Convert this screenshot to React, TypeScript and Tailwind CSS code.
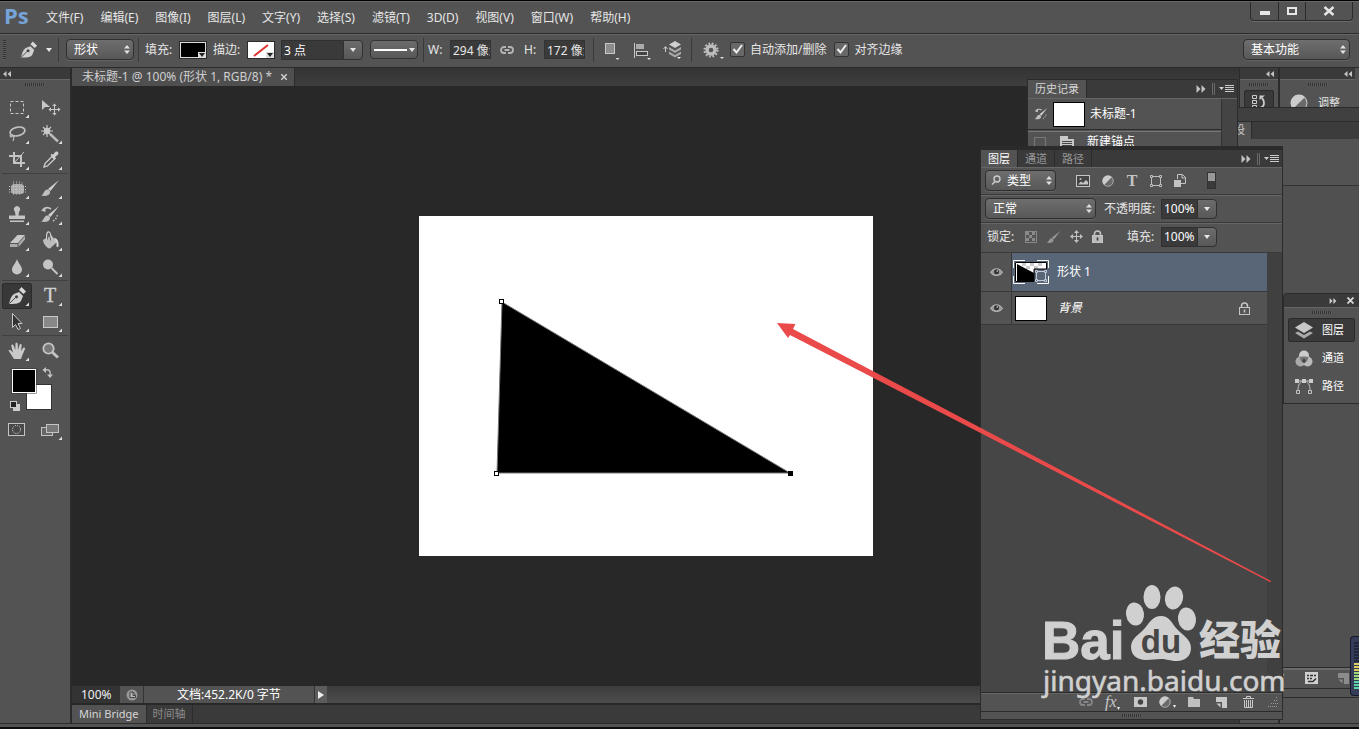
import type { ReactNode } from 'react';
import clsx from 'clsx';

const MENUS = [
  '文件(F)',
  '编辑(E)',
  '图像(I)',
  '图层(L)',
  '文字(Y)',
  '选择(S)',
  '滤镜(T)',
  '3D(D)',
  '视图(V)',
  '窗口(W)',
  '帮助(H)',
];

export default function App() {
  return (
    <div className="relative flex h-screen flex-col overflow-hidden border-t border-black bg-[#535353] font-['Noto_Sans','Noto_Sans_CJK_SC',sans-serif] text-xs leading-4 text-[#e6e6e6]">
      <MenuBar />
      <OptionsBar />
      <main className="flex min-h-0 flex-1 border-t border-[#2b2b2b]">
        <Toolbox />
        <DocumentArea />
        <Docks />
      </main>
      <div className="h-1 border-t border-[#2b2b2b] bg-[#535353]" />
      <div className="h-0.5 bg-[#0b0d10]" />

      <BrushPanel />
      <HistoryPanel />
      <LayersPanel />
      <CollapsedPanel />
      <PointerArrow />
      <Watermark />
      <div className="absolute top-[635px] right-0 flex h-[60px] w-[9px] flex-col justify-end gap-px rounded-l-sm border border-r-0 border-[#15182b] bg-[#353c58] pb-1.5 pl-[3px]">
        {Array.from({ length: 16 }, (_, i) => (
          <i
            key={i}
            className={clsx('h-0.5 w-full', i < 7 ? 'bg-[#22263a]' : i < 10 ? 'bg-[#d8cc62]' : i < 13 ? 'bg-[#9fd87a]' : 'bg-[#5fd3a8]')}
          />
        ))}
      </div>
    </div>
  );
}

/* ---------- top bars ---------- */

function MenuBar() {
  return (
    <header className="flex h-8 shrink-0 items-center border-t border-[#666] pl-1">
      <span className="mb-1.5 w-[42px] font-['Open_Sans',sans-serif] text-[22px] leading-6 font-bold text-[#76a3d8]">Ps</span>
      <nav className="flex gap-[17px]">
        {MENUS.map((m) => (
          <button key={m} className="whitespace-nowrap">
            {m}
          </button>
        ))}
      </nav>
      <div className="mr-1.5 ml-auto flex h-[19px] self-start rounded-b-sm border border-t-0 border-[#2b2b2b] shadow-[0_1px_0_#6a6a6a]">
        <button aria-label="最小化" className="flex w-7 items-center justify-center border-r border-[#2b2b2b]">
          <i className="mt-1 h-1 w-2.5 bg-[#e6e6e6]" />
        </button>
        <button aria-label="最大化" className="flex w-[27px] items-center justify-center border-r border-[#2b2b2b]">
          <i className="h-2 w-2.5 border-2 border-[#e6e6e6]" />
        </button>
        <button aria-label="关闭" className="flex w-[46px] items-center justify-center">
          <svg width="12" height="10" viewBox="0 0 12 10" stroke="#e6e6e6" strokeWidth="2.4">
            <path d="M1.5 1l9 8M10.5 1l-9 8" />
          </svg>
        </button>
      </div>
    </header>
  );
}

function OptionsBar() {
  return (
    <section className="flex h-[34px] shrink-0 items-center border-t border-[#2b2b2b] pb-0.5 whitespace-nowrap shadow-[inset_0_1px_0_#666]">
      <div className="ml-[3px] h-5 w-[3px] bg-[repeating-linear-gradient(#333_0_1px,#5c5c5c_1px_2px)]" />
      <svg className="ml-3.5" width="18" height="18" viewBox="3 1 19 18">
        <PenNib />
      </svg>
      <Caret className="ml-2" />
      <Divider className="ml-1.5" />
      <Picker label="工具模式" value="形状" className="ml-[7px] w-[68px]" />
      <Divider className="ml-1" />
      <span className="ml-1.5 w-[34px]">填充:</span>
      <button aria-label="填充颜色" className="relative h-[18px] w-7 border border-[#2b2b2b] bg-black outline-1 -outline-offset-2 outline-[#dcdcdc]">
        <span className="absolute right-0 bottom-0 flex h-1.5 w-2 items-center justify-center bg-[#ddd]">
          <Caret dark />
        </span>
      </button>
      <span className="ml-1.5 w-[34px]">描边:</span>
      <button aria-label="描边颜色" className="relative h-[18px] w-7 border border-[#2b2b2b] bg-white">
        <svg width="26" height="16" viewBox="0 0 26 16">
          <path d="M6 14L20 3" stroke="#e03030" strokeWidth="2" />
        </svg>
        <span className="absolute right-0 bottom-0 flex h-1.5 w-2 items-center justify-center bg-[#ddd]">
          <Caret dark />
        </span>
      </button>
      <Combo label="描边宽度" value="3 点" className="ml-1.5 w-[62px]" />
      <button
        aria-label="描边类型"
        className="ml-[7px] flex h-[19px] w-12 items-center justify-between rounded-sm border border-[#333] bg-linear-to-b from-[#6c6c6c] to-[#585858] pr-0.5 pl-[3px]"
      >
        <i className="h-0.5 w-[33px] bg-white" />
        <Caret />
      </button>
      <Divider className="ml-[5px]" />
      <label className="ml-1 flex items-center">
        <span className="w-[22px]">W:</span>
        <input defaultValue="294 像素" className="h-[19px] w-[41px] border border-[#333] bg-[#3a3a3a] pl-0.5" />
      </label>
      <button aria-label="链接宽高" className="ml-[9px]">
        <LinkIcon />
      </button>
      <label className="ml-2.5 flex items-center">
        <span className="w-5">H:</span>
        <input defaultValue="172 像素" className="h-[19px] w-[41px] border border-[#333] bg-[#3a3a3a] pl-0.5" />
      </label>
      <Divider className="ml-2" />
      <button aria-label="路径操作" className="ml-2.5">
        <svg width="16" height="20" viewBox="0 0 16 20">
          <rect x="1.5" y="3.5" width="9" height="10" fill="#8c8c8c" stroke="#c8c8c8" />
          <path d="M11.500 18h4l-2 2z" fill="#e0e0e0" />
        </svg>
      </button>
      <button aria-label="路径对齐" className="ml-3.5">
        <svg width="17" height="20" viewBox="0 0 17 20">
          <path d="M.5 3v15" stroke="#c8c8c8" />
          <rect x="2" y="4" width="8" height="5" fill="#aaa" />
          <rect x="2.500" y="11.500" width="11" height="4" fill="#444" stroke="#c8c8c8" />
          <path d="M13 18h4l-2 2z" fill="#e0e0e0" />
        </svg>
      </button>
      <button aria-label="路径排列" className="ml-3">
        <svg width="20" height="20" viewBox="0 0 20 20" fill="#a8a8a8">
          <path d="M2.500 7v5M.5 9l2-2.500L4.500 9" stroke="#c8c8c8" fill="none" />
          <path d="M12 1l6 3.500-6 3.500-6-3.500z" fill="#d0d0d0" />
          <path d="M6 7l6 3.500L18 7v2.500l-6 3.500-6-3.500zM6 11.500l6 3.500 6-3.500V14l-6 3.500L6 14z" />
          <path d="M14 17h4l-2 2z" fill="#eee" />
        </svg>
      </button>
      <Divider className="ml-2" />
      <button aria-label="设置" className="ml-[11px]">
        <svg width="21" height="20" viewBox="0 0 21 20">
          <g transform="translate(8 10)" fill="none" stroke="#bcbcbc">
            <circle r="4" strokeWidth="3.400" />
            <circle r="6.400" strokeWidth="2.400" strokeDasharray="1.700 1.651" />
          </g>
          <path d="M17 17h4l-2 2z" fill="#e0e0e0" />
        </svg>
      </button>
      <Tick label="自动添加/删除" className="ml-1.5" />
      <Tick label="对齐边缘" className="ml-2" />
      <Picker label="工作区" value="基本功能" className="mr-[9px] ml-auto w-[107px]" />
    </section>
  );
}

/* ---------- shared controls ---------- */

function Divider({ className }: { className?: string }) {
  return <i className={clsx('h-6 w-px shrink-0 bg-[#3a3a3a]', className)} />;
}

function Caret({ className, dark }: { className?: string; dark?: boolean }) {
  return (
    <svg className={className} width="6" height="4" viewBox="0 0 6 4">
      <path d="M0 0h6L3 4z" fill={dark ? '#222' : '#e6e6e6'} />
    </svg>
  );
}

function Picker({ label, value, className, icon }: { label: string; value: string; className?: string; icon?: ReactNode }) {
  return (
    <span className={clsx('relative inline-flex h-[21px] shrink-0', className)}>
      <select
        aria-label={label}
        className={clsx(
          'w-full appearance-none rounded-sm border border-[#2f2f2f] bg-linear-to-b from-[#6e6e6e] to-[#585858] text-xs leading-4 text-white shadow-[0_1px_0_#636363]',
          icon ? 'pl-[21px]' : 'pl-[7px]',
        )}
      >
        <option>{value}</option>
      </select>
      {icon && <span className="pointer-events-none absolute top-[5px] left-1.5">{icon}</span>}
      <svg className="pointer-events-none absolute top-1.5 right-1" width="6" height="9" viewBox="0 0 6 9" fill="#e0e0e0">
        <path d="M0 3.500h6L3 0zM0 5.500h6L3 9z" />
      </svg>
    </span>
  );
}

function Combo({ label, value, className }: { label: string; value: string; className?: string }) {
  return (
    <span className="flex">
      <input
        aria-label={label}
        defaultValue={value}
        className={clsx('h-5 border border-r-0 border-[#303030] bg-[#3a3a3a] pl-0.5 text-white', className)}
      />
      <button
        aria-label={`${label}选项`}
        className="flex h-5 w-5 items-center justify-center rounded-r-sm border border-[#303030] bg-linear-to-b from-[#6c6c6c] to-[#585858]"
      >
        <Caret />
      </button>
    </span>
  );
}

function Tick({ label, className }: { label: string; className?: string }) {
  return (
    <label className={clsx('flex items-center gap-[5px]', className)}>
      <span className="relative flex">
        <input type="checkbox" defaultChecked className="h-[15px] w-[15px] appearance-none rounded-xs border border-[#333] bg-[#686868]" />
        <svg className="pointer-events-none absolute top-0 left-0" width="15" height="15" viewBox="0 0 15 15">
          <path d="M3.500 7l3 3.500L12 3" fill="none" stroke="#eee" strokeWidth="2" />
        </svg>
      </span>
      {label}
    </label>
  );
}

function Grip() {
  return <div className="mx-auto h-[3px] w-5 bg-[repeating-linear-gradient(90deg,#333_0_1px,#5c5c5c_1px_2px)]" />;
}

function Chevrons({ left }: { left?: boolean }) {
  return (
    <svg width="10" height="8" viewBox="0 0 10 8" fill="#c4c4c4">
      <path d={left ? 'M4.500 1v6L1 4zM9 1v6L5.500 4z' : 'M.5 0v8l4-4zM5.500 0v8l4-4z'} />
    </svg>
  );
}

function PanelTools() {
  return (
    <div className="mr-[3px] ml-auto flex items-center">
      <button aria-label="折叠面板">
        <Chevrons />
      </button>
      <i className="ml-1.5 h-3 w-[3px] border-x border-[#6a6a6a]" />
      <button aria-label="面板菜单" className="ml-1">
        <svg width="15" height="10" viewBox="0 0 15 10">
          <path d="M0 3h5L2.500 6z" fill="#ccc" />
          <path d="M6 1.500h9M6 3.500h9M6 5.500h9M6 7.500h9" stroke="#ccc" strokeWidth="1" />
        </svg>
      </button>
    </div>
  );
}

function LinkIcon({ dim }: { dim?: boolean }) {
  return (
    <svg width="14" height="10" viewBox="0 0 14 10" fill="none" stroke={dim ? '#858585' : '#b4b4b4'} strokeWidth="1.800">
      <path d="M6 2H4a3 3 0 000 6h2M8 2h2a3 3 0 010 6H8M4.500 5h5" />
    </svg>
  );
}

/* ---------- toolbox ---------- */

function PenNib() {
  return (
    <g>
      <path d="M4 18c1-4 2-8 5-10l5-2 4 4-2 5c-2 3-7 3-12 3z" fill="#cfcfcf" />
      <path d="M14 4l2.500-3L21 5.500 18.500 8z" fill="#d8d8d8" />
      <path d="M4.500 17.500l6-6" stroke="#444" />
      <circle cx="11.500" cy="10.800" r="1.600" fill="#444" />
    </g>
  );
}

function BrushShape() {
  return (
    <g>
      <path d="M21 1l-8.500 11-2.500-2z" fill="#d0d0d0" />
      <path d="M9 10.500c2 0 3.500 1.500 3 3.500-1 3-5 3.500-9 2.500 3-1 3-5.500 6-6z" fill="#c0c0c0" />
    </g>
  );
}

function HistoryBrushShape() {
  return (
    <g>
      <BrushShape />
      <path d="M5 4.500c3-2.500 6-2 8-.5" fill="none" stroke="#c4c4c4" strokeWidth="1.600" />
      <path d="M3 5.500L7.500 2v5z" fill="#c4c4c4" />
      <path d="M15 16c3-1.500 4-4 4.500-7" fill="none" stroke="#c4c4c4" strokeWidth="1.400" strokeDasharray="1.500 1.500" />
    </g>
  );
}

const TOOL_GROUPS: { name: string; art: ReactNode; active?: boolean; single?: boolean }[][] = [
  [
    { name: '矩形选框工具', art: <rect x="5.500" y="3.500" width="13" height="12" fill="none" stroke="#c8c8c8" strokeDasharray="3 2" /> },
    {
      name: '移动工具',
      single: true,
      art: (
        <g>
          <path d="M4 2v10l3-3h5z" fill="#c8c8c8" />
          <path d="M12.500 11.500h8M16.500 7.500v8" stroke="#c8c8c8" />
          <path d="M16.500 5.500l2.200 2.500h-4.400zM16.500 17.500l2.200-2.500h-4.400zM10.500 11.500l2.500-2.200v4.400zM22.500 11.500l-2.500-2.200v4.400z" fill="#c8c8c8" />
        </g>
      ),
    },
    {
      name: '套索工具',
      art: (
        <g fill="none" stroke="#c0c0c0" strokeWidth="1.700">
          <ellipse cx="12.500" cy="7.500" rx="7.500" ry="4.300" transform="rotate(-12 12.500 7.500)" />
          <path d="M6 10c-2 2 0 4 1 2.500s3 0 1 4.500" strokeWidth="1.200" />
        </g>
      ),
    },
    {
      name: '魔棒工具',
      art: (
        <g>
          <path d="M12 10l8 7.500" stroke="#bbb" strokeWidth="2.400" />
          <path d="M9 1v12M3 7h12M5 3l8 8M13 3l-8 8" stroke="#c8c8c8" strokeWidth="1.200" />
          <circle cx="9" cy="7" r="3.200" fill="#c8c8c8" />
        </g>
      ),
    },
    {
      name: '裁剪工具',
      art: (
        <g fill="none" stroke="#c4c4c4" strokeWidth="2">
          <path d="M4 6h12v11M9 2v11h11" />
          <path d="M9 13L19 2" strokeWidth="1" />
        </g>
      ),
    },
    {
      name: '吸管工具',
      art: (
        <g>
          <path d="M6 17l1-3.500 7-7L16.500 9l-7 7z" fill="none" stroke="#c8c8c8" strokeWidth="1.400" />
          <path d="M12.500 5l1.200-1.200 1.200 1 2.600-3c1.500-1.300 4 .8 2.500 2.600l-3 2.700 1 1.300-1.300 1.300z" fill="#cfcfcf" />
        </g>
      ),
    },
  ],
  [
    {
      name: '修补工具',
      art: (
        <g>
          <rect x="6" y="5" width="13" height="10" rx="3.500" fill="#a8a8a8" />
          <path d="M4 7.500h17M4 10.500h17M4 13h17M8.500 2.500v14M11.500 2.500v14M14.500 2.500v14M17 3.500v12" stroke="#c4c4c4" strokeDasharray="1 1" />
        </g>
      ),
    },
    { name: '画笔工具', art: <BrushShape /> },
    {
      name: '仿制图章工具',
      art: (
        <g fill="#c4c4c4">
          <path d="M12 1a3.400 3.400 0 012 6l-.5 3.500H20V14H4v-3.500h6.500L10 7a3.400 3.400 0 012-6z" />
          <path d="M5 15.500h14V17H5z" />
        </g>
      ),
    },
    { name: '历史记录画笔工具', art: <HistoryBrushShape /> },
    {
      name: '橡皮擦工具',
      art: (
        <g>
          <path d="M5 12l7.500-8H20l-7 8z" fill="#c8c8c8" />
          <path d="M5 13h7.500v3H5zM13.500 12.500L20 5v3.500L13.500 16z" fill="#aaa" />
        </g>
      ),
    },
    {
      name: '油漆桶工具',
      art: (
        <g>
          <path d="M5 9l8-5 6 7-7 6.500c-2 1-7-5-7-8.500z" fill="#bdbdbd" />
          <path d="M9 9c-1-6 0-8.500 2-8S13 6 13 9" fill="none" stroke="#d8d8d8" strokeWidth="1.200" />
          <path d="M9.500 8.500c0-2 .5-4 1.500-4s1.500 3 1.500 5" fill="none" stroke="#555" />
          <path d="M16 7c3 0 5 3 4.500 8-.2 1.500-2 1.500-2 0 0-2 .5-4-1-5z" fill="#dadada" />
        </g>
      ),
    },
    { name: '模糊工具', art: <path d="M12 2c1 4 5 7 5 10.500a5 5 0 01-10 0C7 9 11 6 12 2z" fill="#c6c6c6" /> },
    {
      name: '减淡工具',
      art: (
        <g>
          <circle cx="10" cy="7.500" r="5" fill="#c4c4c4" />
          <path d="M13.500 11l6 6" stroke="#c4c4c4" strokeWidth="2" />
        </g>
      ),
    },
  ],
  [
    { name: '钢笔工具', active: true, art: <PenNib /> },
    {
      name: '文字工具',
      art: (
        <text x="12" y="16" textAnchor="middle" fontSize="20" fontFamily="Liberation Serif, serif" fill="#d0d0d0" stroke="#d0d0d0" strokeWidth=".4">
          T
        </text>
      ),
    },
    { name: '路径选择工具', art: <path d="M7.500 1.500v14l3-3 2.500 5 2.500-1-2.500-5h4z" fill="#333" stroke="#c8c8c8" /> },
    { name: '矩形工具', art: <rect x="5.500" y="4.500" width="14" height="11" fill="#888" stroke="#c8c8c8" /> },
  ],
  [
    {
      name: '抓手工具',
      art: (
        <path
          d="M3.500 9.500c1-1 2.200-.4 3 .6L8 11.500 6.300 5c-.3-1.600 1.600-2.200 2.200-.7L10.400 9V2.800c0-1.500 2.200-1.500 2.300 0L13 9l1.500-5c.5-1.500 2.400-1 2.200.6L16 10l2.300-3.200c1-1 2.300 0 1.700 1.200L17 15l-1 3H9z"
          fill="#c9c9c9"
        />
      ),
    },
    {
      name: '缩放工具',
      single: true,
      art: (
        <g>
          <path d="M14.500 11.500l5.500 5" stroke="#c4c4c4" strokeWidth="3" />
          <circle cx="10.500" cy="7.500" r="5.200" fill="#777" stroke="#c4c4c4" strokeWidth="1.800" />
        </g>
      ),
    },
  ],
];

function Toolbox() {
  return (
    <aside className="flex w-[72px] shrink-0 flex-col border-r-2 border-[#2b2b2b]">
      <div className="flex h-[11px] items-center bg-[#3a3a3a] pl-0.5">
        <Chevrons left />
      </div>
      <div className="border-t border-[#666] pt-[3px] pb-[9px]">
        <Grip />
      </div>
      {TOOL_GROUPS.map((group, g) => (
        <div key={g} className={clsx('mx-0.5 grid grid-cols-[30px_30px] gap-x-[3px]', g > 0 && 'border-t border-[#404040] pt-0.5')}>
          {group.map((tool) => (
            <button
              key={tool.name}
              aria-label={tool.name}
              className={clsx('flex h-[26px] items-center justify-center rounded-xs border', tool.active ? 'border-[#2b2b2b] bg-[#383838]' : 'border-transparent')}
            >
              <svg width="24" height="20" viewBox="0 0 24 20">
                {tool.art}
                {!tool.single && <path d="M24 16.500V20h-3.500z" fill="#e0e0e0" />}
              </svg>
            </button>
          ))}
        </div>
      ))}
      <div className="flex flex-col gap-px pt-px pl-2">
        <svg width="48" height="56" viewBox="8 364 48 56">
          <rect x="26.500" y="383.500" width="25" height="25" fill="#fff" stroke="#333" />
          <rect x="11.500" y="367.500" width="25" height="25" fill="#333" />
          <rect x="12.500" y="368.500" width="23" height="23" fill="#000" stroke="#fff" />
          <path d="M45 369c4-1 6 1 5 5" fill="none" stroke="#bbb" strokeWidth="1.500" />
          <path d="M46 366v6l-3.500-3zM47 373.500h6l-3 3.500z" fill="#c4c4c4" />
          <rect x="13" y="403" width="7" height="7" fill="#ccc" />
          <rect x="10.500" y="400.500" width="6" height="6" fill="#222" stroke="#ccc" />
        </svg>
        <div className="flex gap-4">
          <button aria-label="快速蒙版">
            <svg width="17" height="18" viewBox="0 0 17 18">
              <rect x=".5" y="1.500" width="16" height="12" fill="#484848" stroke="#c4c4c4" />
              <circle cx="8.500" cy="7.500" r="4" fill="none" stroke="#e0e0e0" strokeDasharray="1 1.100" />
            </svg>
          </button>
          <button aria-label="屏幕模式">
            <svg width="22" height="18" viewBox="0 0 22 18">
              <rect x=".5" y="5.500" width="11" height="8" fill="#666" stroke="#c4c4c4" />
              <rect x="5.500" y="2.500" width="12" height="8" fill="#777" stroke="#c4c4c4" />
              <path d="M21 14.500V18h-3.500z" fill="#e0e0e0" />
            </svg>
          </button>
        </div>
      </div>
    </aside>
  );
}

/* ---------- document ---------- */

function DocumentArea() {
  return (
    <section className="flex min-w-0 flex-1 flex-col bg-[#282828]">
      <div className="flex h-[18px] shrink-0 bg-linear-to-b from-[#343434] to-[#3e3e3e]">
        <div className="flex items-center border-r border-[#2b2b2b] bg-[#4f4f4f] pr-[7px] pl-2.5 text-[#d0d0d0]">
          <span className="whitespace-nowrap">未标题-1 @ 100% (形状 1, RGB/8) *</span>
          <button aria-label="关闭文档" className="ml-[9px]">
            <svg width="6" height="6" viewBox="0 0 6 6" stroke="#ccc" strokeWidth="1.500">
              <path d="M0 0l6 6M6 0L0 6" />
            </svg>
          </button>
        </div>
      </div>
      <div className="flex min-h-0 flex-1">
        <div className="flex flex-1 items-center justify-center">
          <svg className="bg-white" width="454" height="340" viewBox="0 0 454 340">
            <path d="M83 86l-5 171h293z" stroke="#777" />
            <g fill="#fff" stroke="#000">
              <rect x="80.500" y="83.500" width="4" height="4" />
              <rect x="75.500" y="255.500" width="4" height="4" />
              <rect x="369.500" y="255.500" width="4" height="4" fill="#000" />
            </g>
          </svg>
        </div>
        <div className="w-[19px] bg-[#3f3f3f]" />
      </div>
      <div className="flex h-[17px] shrink-0 items-stretch bg-linear-to-b from-[#3c3c3c] to-[#4c4c4c] leading-[17px]">
        <span className="w-12 bg-[#333] pl-[9px] text-[#f0f0f0]">100%</span>
        <button aria-label="状态" className="flex w-6 items-center justify-center border-r border-[#333] bg-[#535353]">
          <svg width="12" height="12" viewBox="0 0 12 12">
            <circle cx="6" cy="6" r="5.500" fill="#999" />
            <path d="M4 3v5.500h5.500V6.500L7 3z" fill="#bbb" stroke="#444" />
            <path d="M7 3v3.500h2.500" fill="none" stroke="#444" />
          </svg>
        </button>
        <span className="w-[171px] border-r border-[#333] bg-[#535353] text-center text-white">文档:452.2K/0 字节</span>
        <button aria-label="显示状态菜单" className="flex w-3 items-center justify-center bg-[#5c5c5c]">
          <svg width="6" height="8" viewBox="0 0 6 8">
            <path d="M0 0v8l6-4z" fill="#eee" />
          </svg>
        </button>
      </div>
      <div className="mt-0.5 flex h-[18px] shrink-0 bg-[#3a3a3a] text-[11px]">
        <button className="bg-[#535353] px-[7px] text-[#d6d6d6]">Mini Bridge</button>
        <button className="border-x border-[#2b2b2b] px-1.5 text-[#8c8c8c]">时间轴</button>
      </div>
    </section>
  );
}

function Docks() {
  return (
    <aside className="flex w-[120px] shrink-0 border-l border-[#2b2b2b] text-[11px]">
      <div className="flex w-10 flex-col border-r-2 border-[#2b2b2b]">
        <div className="flex h-[11px] items-center justify-end bg-[#3a3a3a] pr-[3px]">
          <Chevrons left />
        </div>
        <div className="border-t border-[#666] pt-[3px] pb-1">
          <Grip />
        </div>
        <button aria-label="历史记录" className="mx-1 flex h-6 justify-center rounded-xs border border-[#2b2b2b] bg-[#3a3a3a] pt-0.5">
          <svg width="18" height="18" viewBox="0 0 18 18" fill="none" stroke="#ccc">
            <path d="M2.500 2.500h4v3h-4zM2.500 7.500h4v3h-4zM2.500 12.500h4v3h-4z" />
            <path d="M10 15c5-1 5-7 2-10" strokeWidth="1.800" />
            <path d="M9.500 7V2.500H15z" fill="#ccc" stroke="none" />
          </svg>
        </button>
      </div>
      <div className="flex flex-1 flex-col border-r-4 border-[#535353]">
        <div className="flex h-[11px] items-center justify-end bg-[#3a3a3a] pr-0.5">
          <Chevrons left />
        </div>
        <div className="border-t border-[#666] pt-[3px] pb-1">
          <Grip />
        </div>
        <button className="flex items-center gap-2.5 pt-1 pl-2.5">
          <HalfCircle size={18} />
          调整
        </button>
      </div>
    </aside>
  );
}

function HalfCircle({ size }: { size: number }) {
  return (
    <svg width={size} height={size} viewBox="0 0 17 17">
      <circle cx="8.500" cy="8.500" r="7.500" fill="#6a6a6a" stroke="#c4c4c4" />
      <path d="M3 14A7.700 7.700 0 0114 3z" fill="#ccc" />
    </svg>
  );
}

/* ---------- floating panels ---------- */

function BrushPanel() {
  return (
    <section className="absolute top-[106px] right-0 flex h-[591px] w-[180px] flex-col border-y border-[#2b2b2b] bg-[#535353]">
      <div className="h-[13px] bg-[#404040]" />
      <div className="flex h-[18px] border-t border-[#2b2b2b] bg-[#3c3c3c] text-[11px]">
        <span className="border-r border-[#2b2b2b] bg-[#535353] pr-1.5 pl-[22px] text-[#ccc]">画笔预设</span>
      </div>
      <div className="h-[47px] border-b border-[#333]" />
      <div className="flex-1 bg-[#505050]" />
      <div className="flex h-[22px] items-center justify-end gap-5 border-y border-[#2b2b2b] pr-2.5 shadow-[inset_0_2px_0_#6a6a6a]">
        <svg width="10" height="10" viewBox="0 0 10 10">
          <path d="M1 6l2 3 6-8" fill="none" stroke="#888" strokeWidth="1.500" />
        </svg>
        <svg width="13" height="12" viewBox="0 0 13 12">
          <path d="M0 0h13v12H0z" fill="#d0d0d0" />
          <path d="M2 3.500h2M5 3.500h3M9 3.500h2M2 6.500h2M5 6.500h2M3 9.500h5l3-3" stroke="#333" strokeWidth="1.500" fill="none" />
        </svg>
        <NewPage dim />
      </div>
      <div className="h-2" />
    </section>
  );
}

function HistoryPanel() {
  return (
    <section className="absolute top-[78px] right-[121px] flex w-[211px] flex-col border border-[#2b2b2b] bg-[#535353]">
      <div className="flex h-[18px] shrink-0 bg-[#3a3a3a] text-[11px]">
        <span className="border-r border-[#2b2b2b] bg-[#535353] px-[7px] leading-[18px] text-[#d6d6d6]">历史记录</span>
        <PanelTools />
      </div>
      <div className="flex flex-1 border-t border-[#666]">
        <div className="flex-1">
          <div className="flex h-[31px] items-center border-b border-[#2b2b2b] pl-1.5">
            <svg width="14" height="14" viewBox="2 1 20 17">
              <HistoryBrushShape />
            </svg>
            <i className="ml-[5px] h-[25px] w-8 border border-black bg-white" />
            <span className="ml-[5px] text-white">未标题-1</span>
          </div>
          <div className="mt-px flex border-t border-[#777] pt-0.5 pl-1.5">
            <i className="mt-[3px] h-3 w-3 border border-[#777]" />
            <svg className="mt-0.5 ml-3.5" width="14" height="14" viewBox="0 0 14 14">
              <path d="M0 0h8v3h6v11H0z" fill="#c8c8c8" />
              <path d="M2 5.500h10M2 7.500h10M2 9.500h10" stroke="#444" />
            </svg>
            <span className="ml-[13px] text-white">新建锚点</span>
          </div>
        </div>
        <div className="w-4 border-l border-[#333] bg-[#444]" />
      </div>
    </section>
  );
}

function Shape({ bright }: { bright?: boolean }) {
  return (
    <svg width="12" height="12" viewBox="0 0 12 12" fill="none" stroke={bright ? '#c3cad6' : '#bdbdbd'}>
      <path d="M3 1.500h6M3 10.500h6M1.500 3v6M10.500 3v6" />
      <path d="M.5.5h2v2h-2zM9.500.5h2v2h-2zM.5 9.500h2v2h-2zM9.500 9.500h2v2h-2z" />
    </svg>
  );
}

function Padlock({ hollow }: { hollow?: boolean }) {
  return (
    <svg width="11" height="13" viewBox="0 0 11 13">
      <path d="M2.500 6V4a3 3 0 016 0v2" fill="none" stroke="#c4c4c4" strokeWidth="1.500" />
      <rect x=".5" y="5.500" width="10" height="7" fill={hollow ? '#555' : '#bbb'} stroke="#c4c4c4" />
      <path d="M5.500 7.500v3" stroke={hollow ? '#c4c4c4' : '#333'} strokeWidth="1.500" />
    </svg>
  );
}

function NewPage({ dim }: { dim?: boolean }) {
  return (
    <svg width="11" height="11" viewBox="0 0 11 11" fill={dim ? '#8c8c8c' : '#c8c8c8'}>
      <path d="M0 0h11v11H6V5H0z" />
      <path d="M.5 6.500h4v4z" />
    </svg>
  );
}

function Eye() {
  return (
    <svg width="13" height="10" viewBox="0 0 13 10">
      <path d="M.5 5.500c2.500-5 9.500-5 12 0-2.500 4-9.500 4-12 0z" fill="#999" stroke="#bbb" />
      <circle cx="6.500" cy="4.800" r="2.500" fill="#333" />
      <circle cx="7.300" cy="4" r=".8" fill="#ddd" />
    </svg>
  );
}

function LayersPanel() {
  return (
    <section className="absolute top-[145px] right-[76px] bottom-[9px] flex w-[303px] flex-col border border-t-4 border-[#2b2b2b] bg-[#535353] whitespace-nowrap">
      <div className="flex h-[17px] shrink-0 bg-[#3a3a3a] text-[11px] leading-[17px]">
        <button className="bg-[#535353] px-[7px] text-white">图层</button>
        <button className="border-x border-[#2b2b2b] px-[7px] text-[#999]">通道</button>
        <button className="border-r border-[#2b2b2b] px-[7px] text-[#999]">路径</button>
        <PanelTools />
      </div>

      <div className="flex h-7 shrink-0 items-center border-b border-[#3a3a3a] pl-1 shadow-[inset_0_1px_0_#666]">
        <Picker
          label="滤镜类型"
          value="类型"
          className="w-[71px]"
          icon={
            <svg width="10" height="10" viewBox="0 0 10 10" fill="none" stroke="#ccc" strokeWidth="1.400">
              <circle cx="6" cy="4" r="3" />
              <path d="M4 6.500L1 9.500" />
            </svg>
          }
        />
        <div className="ml-5 flex items-center gap-3">
          <button aria-label="像素图层">
            <svg width="14" height="12" viewBox="0 0 14 12">
              <rect x=".5" y=".5" width="13" height="11" fill="#444" stroke="#c4c4c4" />
              <path d="M2 9.500l3-3 2 1.500 3-3 2 2v2.500z" fill="#c4c4c4" />
              <circle cx="4.500" cy="4" r="1" fill="#c4c4c4" />
            </svg>
          </button>
          <button aria-label="调整图层">
            <HalfCircle size={12} />
          </button>
          <button aria-label="文字图层" className="w-3 font-['Liberation_Serif',serif] text-base leading-4 font-bold text-[#c4c4c4]">
            T
          </button>
          <button aria-label="形状图层">
            <Shape />
          </button>
          <button aria-label="智能对象">
            <svg width="12" height="13" viewBox="0 0 12 13">
              <path d="M3.500 5V.5h5L11.500 3.500v6H7" fill="none" stroke="#c4c4c4" />
              <path d="M8 .5v3.500h3.500" fill="none" stroke="#c4c4c4" />
              <rect y="6" width="7" height="7" fill="#c4c4c4" />
            </svg>
          </button>
        </div>
        <button aria-label="滤镜开关" className="ml-[21px] h-[17px] w-[9px] border border-[#333] bg-[#3a3a3a]">
          <i className="block h-2 bg-[#999]" />
          <i className="block h-[7px]" />
        </button>
      </div>

      <div className="flex h-7 shrink-0 items-center border-b border-[#3a3a3a] pl-1 shadow-[inset_0_1px_0_#666]">
        <Picker label="混合模式" value="正常" className="w-[111px]" />
        <span className="ml-2 w-[57px]">不透明度:</span>
        <Combo label="不透明度" value="100%" className="w-[36px]" />
      </div>

      <div className="flex h-[30px] shrink-0 items-center border-b border-[#3a3a3a] pb-0.5 pl-1.5 shadow-[inset_0_1px_0_#666]">
        <span className="w-[38px]">锁定:</span>
        <div className="flex items-center gap-[9px]">
          <button aria-label="锁定透明像素">
            <svg width="12" height="12" viewBox="0 0 12 12" fill="#777" stroke="#888">
              <rect x=".5" y=".5" width="11" height="11" fill="#555" />
              <path d="M1 1h3v3H1zM7 1h3v3H7zM4 4h3v3H4zM1 7h3v3H1zM7 7h3v3H7z" stroke="none" fill="#8a8a8a" />
            </svg>
          </button>
          <button aria-label="锁定图像像素" className="opacity-60">
            <svg width="15" height="14" viewBox="2 0 20 18">
              <BrushShape />
            </svg>
          </button>
          <button aria-label="锁定位置">
            <svg width="13" height="13" viewBox="0 0 13 13" fill="#c0c0c0" stroke="#c0c0c0">
              <path d="M6.500 2v9M2 6.500h9" />
              <path d="M6.500 0L9 3H4zM6.500 13L9 10H4zM0 6.500L3 4v5zM13 6.500L10 4v5z" stroke="none" />
            </svg>
          </button>
          <button aria-label="锁定全部">
            <Padlock />
          </button>
        </div>
        <span className="ml-6 w-[34px]">填充:</span>
        <Combo label="填充" value="100%" className="w-[36px]" />
      </div>

      <div className="flex min-h-0 flex-1">
        <ul className="flex-1 bg-[#464646]">
          <li className="flex h-[39px] items-center border-b border-[#383838] bg-[#596678]">
            <button aria-label="隐藏形状 1" className="flex h-full w-[31px] items-center justify-center border-r border-[#383838] bg-[#535353]">
              <Eye />
            </button>
            <span className="relative ml-px">
              <svg className="block" width="36" height="24" viewBox="0 0 36 24">
                <path d="M2 2h32v20H2z" fill="#fff" />
                <path d="M9 2h4v4H9zM17 2h4v4h-4zM25 2h4v4h-4zM13 6h4v3h-4zM21 6h4v3h-4z" fill="#ccc" />
                <path d="M4 4l17 9v8H4z" fill="#000" />
                <path d="M21 9h15v15H21z" fill="#596678" />
                <path d="M21 21.500H2.500v-19h31V9H21z" fill="none" stroke="#000" />
                <path d="M.5 8V.5H12M24 .5h11.500V8M.5 16v7.500H12M24 23.500h11.500V16" fill="none" stroke="#fff" />
              </svg>
              <span className="absolute top-2.5 left-[22px]">
                <Shape bright />
              </span>
            </span>
            <span className="ml-2 text-white">形状 1</span>
          </li>
          <li className="flex h-[33px] items-center border-b border-[#383838] bg-[#535353]">
            <button aria-label="隐藏背景" className="flex h-full w-[31px] items-center justify-center border-r border-[#383838]">
              <Eye />
            </button>
            <i className="ml-[3px] h-[25px] w-8 border border-black bg-white" />
            <span className="ml-[11px] text-white italic">背景</span>
            <span className="mr-[17px] ml-auto">
              <Padlock hollow />
            </span>
          </li>
        </ul>
        <div className="w-[15px] bg-[#404040]" />
      </div>

      <div className="flex h-5 shrink-0 items-center justify-end gap-3 border-y border-[#2b2b2b] pr-0.5 shadow-[inset_0_1px_0_#666]">
        <button aria-label="链接图层">
          <LinkIcon dim />
        </button>
        <button aria-label="图层样式" className="flex w-[17px] items-end font-['Liberation_Serif',serif] text-base leading-4 text-[#c8c8c8] italic">
          fx
          <svg width="3" height="3" viewBox="0 0 3 3">
            <path d="M0 0h3L1.500 3z" fill="#eee" />
          </svg>
        </button>
        <button aria-label="图层蒙版">
          <svg width="13" height="10" viewBox="0 0 13 10">
            <path d="M0 0h13v10H0z" fill="#c8c8c8" />
            <circle cx="6.500" cy="5" r="2.700" fill="#444" />
          </svg>
        </button>
        <button aria-label="新建调整图层" className="flex items-end gap-0.5">
          <HalfCircle size={12} />
          <svg width="3" height="3" viewBox="0 0 3 3">
            <path d="M0 0h3L1.500 3z" fill="#eee" />
          </svg>
        </button>
        <button aria-label="新建组">
          <svg width="12" height="10" viewBox="0 0 12 10">
            <path d="M0 0h5l1 2h6v8H0z" fill="#c0c0c0" />
          </svg>
        </button>
        <button aria-label="新建图层" className="ml-1">
          <NewPage />
        </button>
        <button aria-label="删除图层" className="ml-1">
          <svg width="11" height="12" viewBox="0 0 11 12" fill="none" stroke="#c8c8c8">
            <path d="M0 2.500h11M3.500 2V.5h4V2M1.500 4v7.500h8V4M3.500 4v7M5.500 4v7M7.500 4v7" />
          </svg>
        </button>
        <svg width="14" height="12" viewBox="0 0 14 12" stroke="#999" strokeDasharray="1 1">
          <path d="M2 10.500h10M5 7.500h7M8 4.500h4M10 1.500h2" />
        </svg>
      </div>
      <div className="flex h-[7px] shrink-0 items-center">
        <Grip />
      </div>
    </section>
  );
}

function CollapsedPanel() {
  return (
    <section className="absolute top-[292px] right-0 flex w-[76px] flex-col rounded-tl-sm border border-r-0 border-[#2b2b2b] bg-[#535353] pb-[5px]">
      <div className="flex h-[13px] items-center justify-end gap-2.5 bg-[#3a3a3a] pr-[5px]">
        <svg width="8" height="6" viewBox="0 0 10 8" fill="#ccc">
          <path d="M.5 0v8l4-4zM5.500 0v8l4-4z" />
        </svg>
        <button aria-label="关闭面板">
          <svg width="7" height="7" viewBox="0 0 7 7" stroke="#d8d8d8" strokeWidth="1.800">
            <path d="M.5.5l6 6M6.500.5l-6 6" />
          </svg>
        </button>
      </div>
      <div className="border-t border-[#666] pt-[3px] pb-1">
        <Grip />
      </div>
      <div className="flex flex-col gap-1 px-1 text-[11px] text-white">
        <button className="flex h-6 items-center gap-[9px] rounded-xs border border-[#2b2b2b] bg-[#3a3a3a] pl-1.5">
          <svg width="18" height="17" viewBox="0 0 18 17" fill="#c8c8c8">
            <path d="M9 0l9 5.500L9 11 0 5.500z" />
            <path d="M0 11l3-1.500 6 3.500 6-3.500 3 1.500-9 5.500z" fill="#aaa" />
          </svg>
          图层
        </button>
        <button className="flex h-6 items-center gap-[9px] border border-transparent pl-1.5">
          <svg width="18" height="17" viewBox="0 0 18 17">
            <circle cx="9" cy="5.500" r="5" fill="#ccc" />
            <circle cx="5.500" cy="11.500" r="5" fill="#aaa" />
            <circle cx="12.500" cy="11.500" r="5" fill="#bbb" />
            <path d="M9 6.500c2 0 4 .5 4.500 1-.5 3-2.500 5-4.500 6-2-1-4-3-4.500-6 .5-.5 2.500-1 4.500-1z" fill="#777" />
            <path d="M9 8l2 3-2 2-2-2z" fill="#444" />
          </svg>
          通道
        </button>
        <button className="flex h-6 items-center gap-[9px] border border-transparent pl-1.5">
          <svg width="18" height="17" viewBox="0 0 18 17">
            <path d="M2 3h14M3 12c0-5 2-9 6-9s6 4 6 9" fill="none" stroke="#c4c4c4" />
            <path d="M0 1h4v4H0zM7 1h4v4H7zM14 1h4v4h-4z" fill="#ccc" />
            <path d="M1.500 12.500h3v3h-3zM13.500 12.500h3v3h-3z" fill="none" stroke="#c4c4c4" />
          </svg>
          路径
        </button>
      </div>
    </section>
  );
}

/* ---------- annotations ---------- */

function PointerArrow() {
  return (
    <svg className="pointer-events-none absolute top-[320px] right-[87px]" width="496" height="264" viewBox="776 321 496 264">
      <path d="M777 323l18.500 1-2.500 5 478 252-.5 1.200L790 335l-2 3z" fill="#ea4a4a" />
    </svg>
  );
}

function Watermark() {
  return (
    <svg className="pointer-events-none absolute right-[72px] bottom-[29px]" width="246" height="118" viewBox="1041 582 246 118" fill="#d0d0d0">
      <text x="1042" y="659" fontSize="53" fontWeight="700" fontFamily="Liberation Sans, sans-serif" stroke="#d0d0d0">
        Bai
      </text>
      <ellipse cx="1135" cy="614" rx="9" ry="11.500" transform="rotate(-8 1135 614)" />
      <ellipse cx="1152" cy="597" rx="8.500" ry="12" />
      <ellipse cx="1174" cy="598" rx="9" ry="11.500" transform="rotate(14 1174 598)" />
      <ellipse cx="1187" cy="619" rx="9" ry="11.500" transform="rotate(-8 1187 619)" />
      <path d="M1161 616c8 0 10 6 15 12 6 7 15 11 15 20 0 8-6 13-14 13-7 0-10-2-16-2s-9 1-15 1c-9 0-15-5-15-13 0-9 8-12 14-19 5-6 8-12 16-12z" />
      <text x="1161" y="653" textAnchor="middle" fontSize="33" fontWeight="700" fontFamily="Liberation Sans, sans-serif" fill="#464646">
        du
      </text>
      <text x="1199" y="655" fontSize="41" fontWeight="900" fontFamily="Noto Sans CJK SC, sans-serif">
        经验
      </text>
      <text x="1043" y="691" fontSize="28" fontFamily="Noto Sans, sans-serif" stroke="#d0d0d0" strokeWidth=".6">
        jingyan.baidu.com
      </text>
    </svg>
  );
}
